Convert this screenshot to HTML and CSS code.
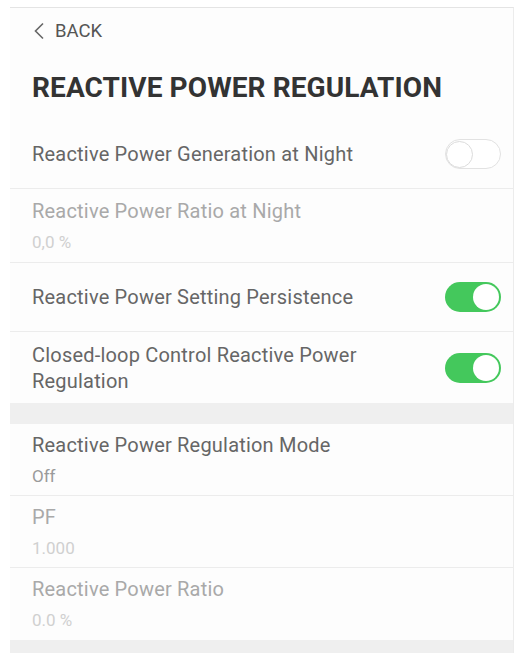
FILE: index.html
```html
<!DOCTYPE html>
<html>
<head>
<meta charset="utf-8">
<link rel="stylesheet" href="styles.css">
</head>
<body>
<div class="screen">
  <div class="back">
    <svg class="chev" width="12" height="18" viewBox="0 0 12 18"><path d="M10 1.5 L2.5 9 L10 16.5" fill="none" stroke="#666" stroke-width="1.6"/></svg>
    <span>BACK</span>
  </div>
  <h1 class="title">REACTIVE POWER REGULATION</h1>

  <div class="row single">
    <span class="label">Reactive Power Generation at Night</span>
    <span class="toggle off"><span class="knob"></span></span>
  </div>
  <div class="row double r2">
    <div class="label dis">Reactive Power Ratio at Night</div>
    <div class="value faint">0,0 %</div>
  </div>
  <div class="row single">
    <span class="label">Reactive Power Setting Persistence</span>
    <span class="toggle on"><span class="knob"></span></span>
  </div>
  <div class="row single tall">
    <span class="label">Closed-loop Control Reactive Power<br>Regulation</span>
    <span class="toggle on"><span class="knob"></span></span>
  </div>
  <div class="gap"></div>
  <div class="row double">
    <div class="label">Reactive Power Regulation Mode</div>
    <div class="value">Off</div>
  </div>
  <div class="row double">
    <div class="label dis">PF</div>
    <div class="value faint">1.000</div>
  </div>
  <div class="row double last">
    <div class="label dis">Reactive Power Ratio</div>
    <div class="value faint">0.0 %</div>
  </div>
  <div class="gap end"></div>
</div>
</body>
</html>
```
FILE: styles.css
```css
html, body {
  margin: 0;
  padding: 0;
  background: #ffffff;
}
body {
  font-family: Roboto, "Liberation Sans", sans-serif;
}
.screen {
  margin: 7px 6px 0 10px;
  border-top: 1px solid #e4e4e4;
  border-right: 1px solid #ececec;
  background: #fdfdfd;
}
.back {
  height: 46px;
  display: flex;
  align-items: center;
  padding-left: 23px;
  gap: 10px;
  color: #555;
  font-size: 18.5px;
}
.title {
  margin: 0;
  height: 66px;
  display: flex;
  align-items: center;
  padding-left: 22px;
  font-size: 28px;
  font-weight: 700;
  color: #333;
  letter-spacing: 0.1px;
}
.row {
  padding: 0 12px 0 22px;
  border-bottom: 1px solid #ececec;
  box-sizing: border-box;
}
.row.single {
  height: 69px;
  display: flex;
  align-items: center;
  justify-content: space-between;
}
.row.tall {
  height: 71px;
  border-bottom: none;
}
.row.double {
  height: 72px;
  padding-top: 8px;
}
.row.r2 { height: 74px; padding-top: 9px; }
.row.last { border-bottom: none; }
.label {
  font-size: 20px;
  letter-spacing: 0.2px;
  color: #666;
  line-height: 26px;
}
.label.dis { color: #a9a9a9; }
.value {
  margin-top: 8px;
  font-size: 17px;
  color: #9a9a9a;
  line-height: 20px;
}
.value.faint { color: #d0d0d0; }
.gap {
  height: 21px;
  background: #efefef;
}
.gap.end { height: 13px; }
.toggle {
  width: 56px;
  height: 30px;
  border-radius: 15px;
  box-sizing: border-box;
  display: flex;
  align-items: center;
  flex-shrink: 0;
}
.toggle.off {
  border: 1.5px solid #e2e2e2;
  background: #fff;
  justify-content: flex-start;
}
.toggle.off .knob {
  width: 27px;
  height: 27px;
  border-radius: 50%;
  border: 1.5px solid #dcdcdc;
  box-sizing: border-box;
  background: #fff;
}
.toggle.on {
  background: #44c85c;
  justify-content: flex-end;
  padding-right: 2px;
}
.toggle.on .knob {
  width: 26px;
  height: 26px;
  border-radius: 50%;
  background: #fff;
}
```
